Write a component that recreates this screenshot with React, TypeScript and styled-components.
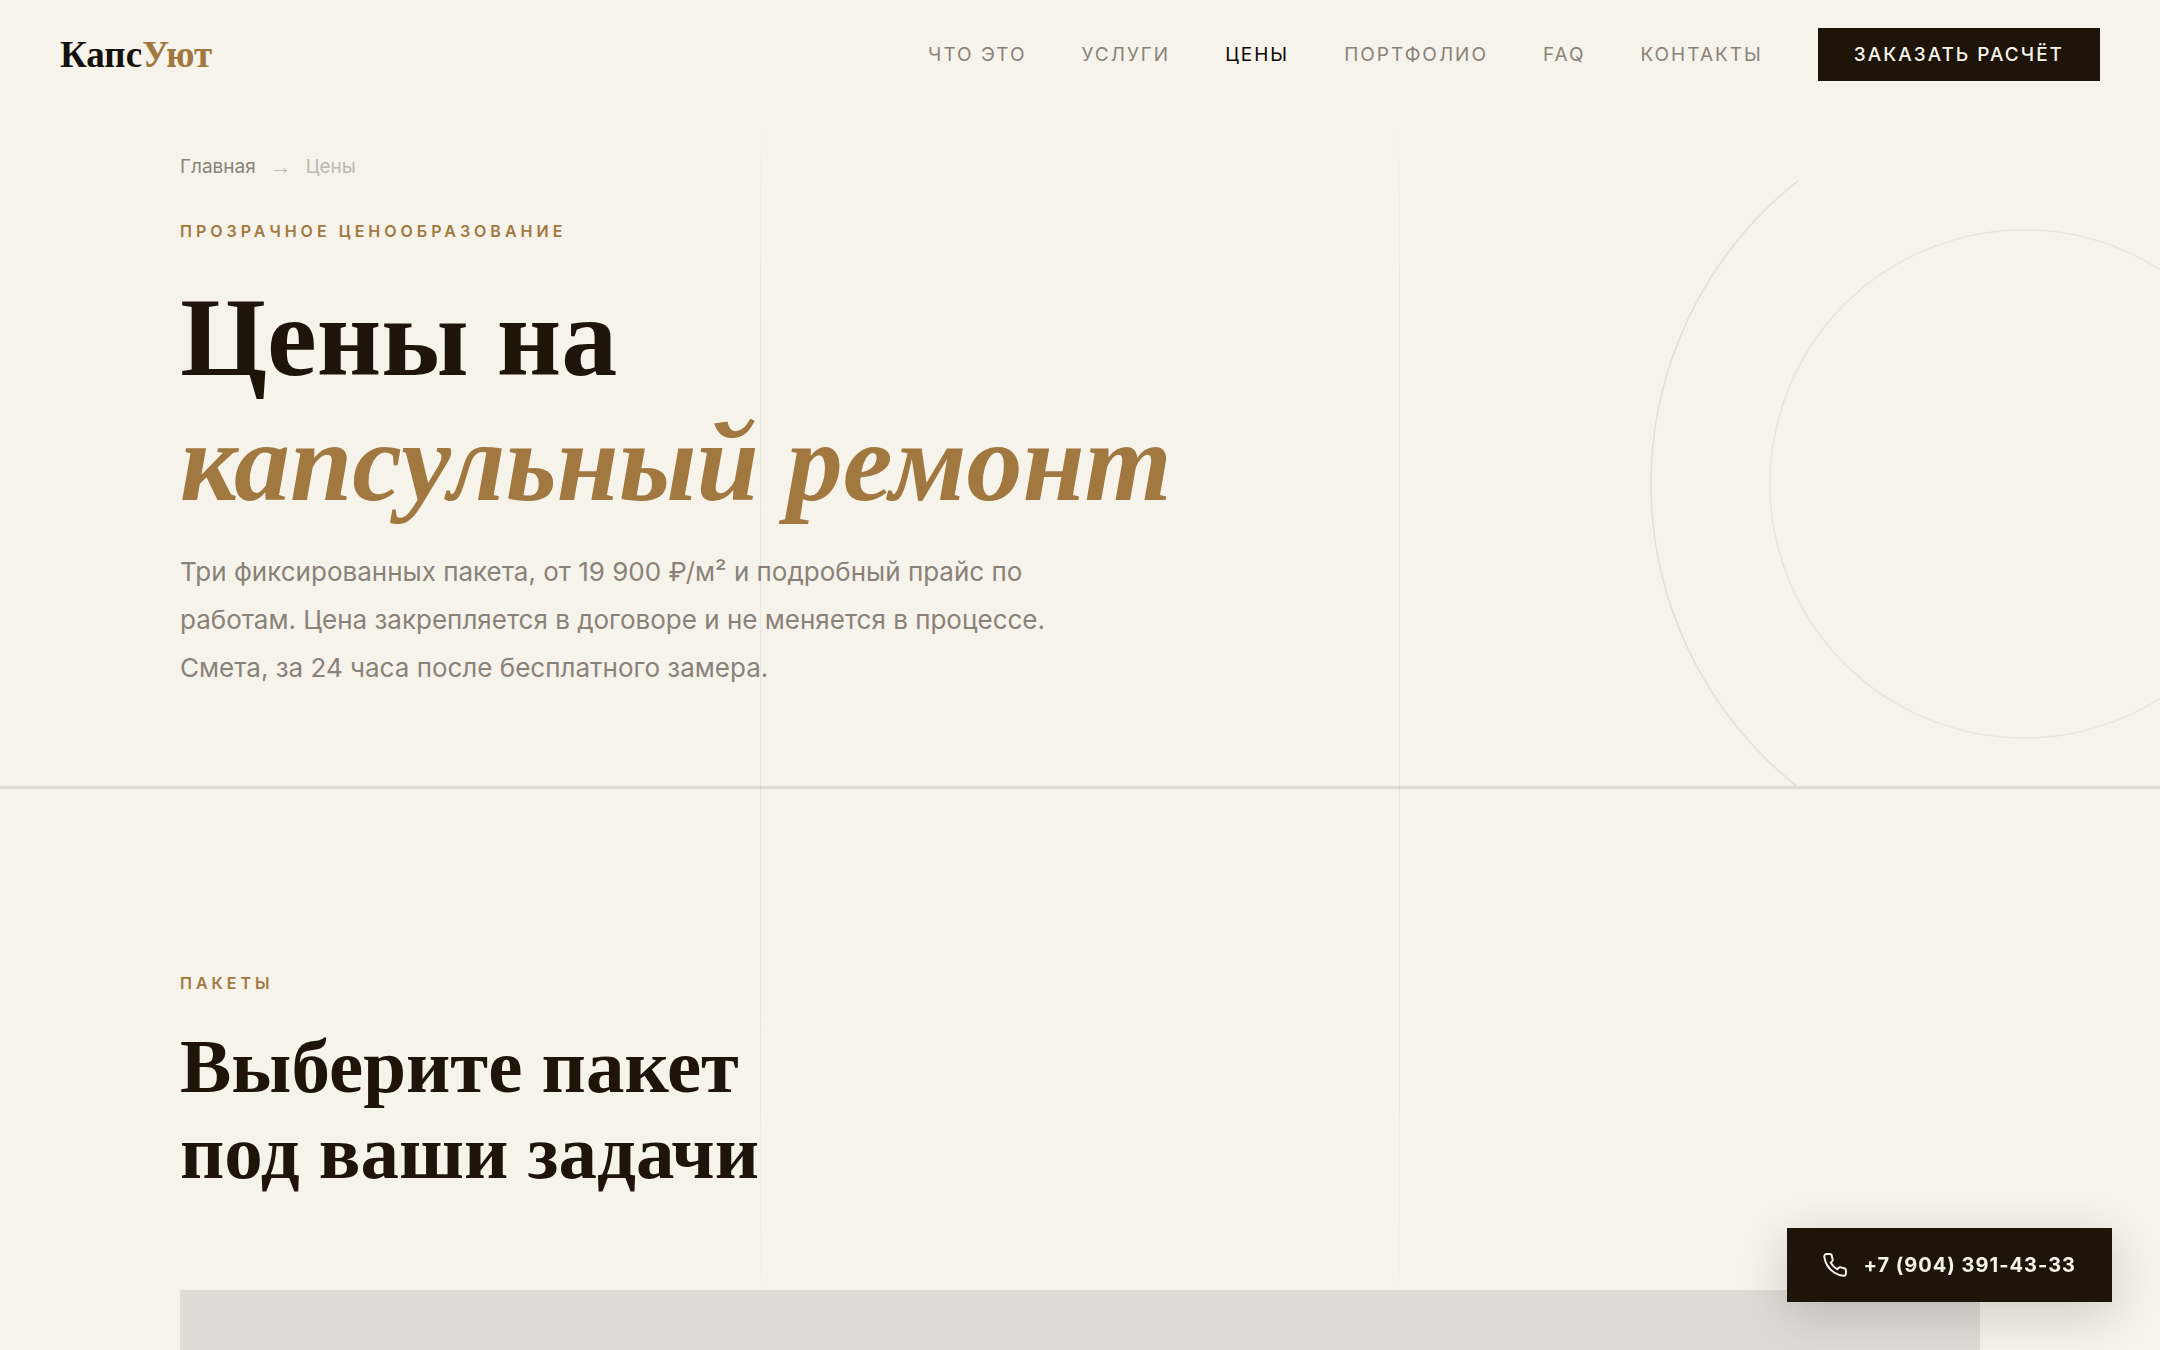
import React from "react";
import styled, { createGlobalStyle } from "styled-components";

const serif = `"Liberation Serif", "Times New Roman", serif`;
const sans = `Inter, "Noto Sans", sans-serif`;

const color = {
  paper: "#f6f3eb",
  ink: "#1e140a",
  gold: "#a07840",
  muted: "#8a8279",
  faint: "#bfb9b0",
  line: "#e0dbd5",
};

const GlobalStyle = createGlobalStyle`
  *, *::before, *::after { box-sizing: border-box; }
  html { background: ${color.paper}; }
  body {
    margin: 0;
    color: ${color.ink};
    font-family: ${sans};
    overflow-x: hidden;
  }
  h1, h2, p, ul, ol { margin: 0; padding: 0; }
  ul, ol { list-style: none; }
  a { color: inherit; text-decoration: none; }
`;

const Page = styled.div`
  position: relative;
  height: 100vh;
  overflow: hidden;
  display: flex;
  flex-direction: column;
`;

const Guides = styled.div`
  position: absolute;
  inset: 0;
  display: flex;
  justify-content: center;
  pointer-events: none;
  z-index: 2;
`;

const GuideColumn = styled.div`
  width: 640px;
  border: 1px solid;
  border-width: 0 1px;
  border-image: linear-gradient(
      to bottom,
      transparent 8%,
      rgba(30, 20, 10, 0.06) 24%,
      rgba(30, 20, 10, 0.06) 76%,
      transparent
    )
    1;
`;

const Header = styled.header`
  flex: none;
  display: flex;
  align-items: center;
  justify-content: space-between;
  padding: 28px 60px;
`;

const Logo = styled.a`
  font: 700 37px/44px ${serif};
  color: #15110c;
`;

const LogoAccent = styled.span`
  color: ${color.gold};
`;

const Nav = styled.nav`
  display: flex;
  align-items: center;
  gap: 55px;
`;

const NavList = styled.ul`
  display: flex;
  gap: 55px;
`;

const NavLink = styled.a<{ $active?: boolean }>`
  font-size: 19px;
  line-height: 25px;
  letter-spacing: 2px;
  text-transform: uppercase;
  color: ${(p) => (p.$active ? "#0c0804" : color.muted)};
`;

const OrderButton = styled.button`
  border: 0;
  padding: 14px 36px;
  background: ${color.ink};
  color: ${color.paper};
  font: 500 19px/25px ${sans};
  letter-spacing: 2px;
  text-transform: uppercase;
`;

const Hero = styled.section`
  flex: none;
  position: relative;
  padding: 46px 180px 94px;
  border-bottom: 3px solid ${color.line};
`;

const Rings = styled.svg`
  position: absolute;
  right: 0;
  bottom: 0;
  width: 540px;
  height: 605px;
  fill: none;
  stroke: ${color.line};
`;

const Crumbs = styled.ol`
  display: flex;
  gap: 14px;
  margin-bottom: 40px;
  font-size: 19px;
  line-height: 24px;
  color: ${color.faint};
`;

const CrumbLink = styled.a`
  color: ${color.muted};
`;

const CrumbArrow = styled.li`
  font-family: ${serif};
  font-size: 22px;
`;

const Eyebrow = styled.p`
  font-size: 16px;
  font-weight: 600;
  line-height: 24px;
  letter-spacing: 4px;
  text-transform: uppercase;
  color: ${color.gold};
`;

const Title = styled.h1`
  margin: 32px 0 23px;
  font: 700 112px/125px ${serif};
`;

const TitleAccent = styled.em`
  display: block;
  color: ${color.gold};
`;

const Lead = styled.p`
  max-width: 900px;
  font-size: 26px;
  line-height: 48px;
  color: ${color.muted};
`;

const Packages = styled.section`
  flex: 1;
  display: flex;
  flex-direction: column;
  padding: 182px 180px 0;
`;

const Heading = styled.h2`
  margin: 28px 0 95px;
  font: 700 77px/86px ${serif};
`;

const Plans = styled.div`
  flex: 1;
  background: ${color.line};
`;

const PhoneLink = styled.a`
  position: fixed;
  right: 48px;
  bottom: 48px;
  z-index: 3;
  display: flex;
  align-items: center;
  gap: 16px;
  padding: 25px 36px;
  background: ${color.ink};
  color: ${color.paper};
  font-size: 20px;
  font-weight: 700;
  line-height: 24px;
  letter-spacing: 1px;
  box-shadow: 0 12px 48px rgba(30, 20, 10, 0.18);
`;

const PhoneIcon = styled.svg`
  width: 24px;
  height: 24px;
  fill: none;
  stroke: currentColor;
  stroke-width: 1.8;
  stroke-linecap: round;
  stroke-linejoin: round;
`;

const links = [
  { label: "Что это", href: "#about" },
  { label: "Услуги", href: "#services" },
  { label: "Цены", href: "#prices", active: true },
  { label: "Портфолио", href: "#portfolio" },
  { label: "FAQ", href: "#faq" },
  { label: "Контакты", href: "#contacts" },
];

export default function App() {
  return (
    <Page>
      <GlobalStyle />
      <Guides aria-hidden="true">
        <GuideColumn />
      </Guides>

      <Header>
        <Logo href="#home">
          Капс<LogoAccent>Уют</LogoAccent>
        </Logo>
        <Nav>
          <NavList>
            {links.map((link) => (
              <li key={link.href}>
                <NavLink href={link.href} $active={link.active}>
                  {link.label}
                </NavLink>
              </li>
            ))}
          </NavList>
          <OrderButton type="button">Заказать расчёт</OrderButton>
        </Nav>
      </Header>

      <Hero>
        <Rings viewBox="0 0 540 605" aria-hidden="true">
          <circle cx="417" cy="303" r="386" strokeWidth="1.5" opacity="0.9" />
          <circle cx="404" cy="303" r="254" strokeWidth="1.5" opacity="0.6" />
        </Rings>
        <Crumbs>
          <li>
            <CrumbLink href="#home">Главная</CrumbLink>
          </li>
          <CrumbArrow aria-hidden="true">→</CrumbArrow>
          <li aria-current="page">Цены</li>
        </Crumbs>
        <Eyebrow>Прозрачное ценообразование</Eyebrow>
        <Title>
          Цены на <TitleAccent>капсульный ремонт</TitleAccent>
        </Title>
        <Lead>
          Три фиксированных пакета, от 19 900 ₽/м² и подробный прайс по работам.
          Цена закрепляется в договоре и не меняется в процессе. Смета, за 24
          часа после бесплатного замера.
        </Lead>
      </Hero>

      <Packages>
        <Eyebrow>Пакеты</Eyebrow>
        <Heading>
          Выберите пакет
          <br />
          под ваши задачи
        </Heading>
        <Plans />
      </Packages>

      <PhoneLink href="tel:+79043914333">
        <PhoneIcon viewBox="1 1 22 22" aria-hidden="true">
          <path d="M22 16.92v3a2 2 0 0 1-2.18 2 19.79 19.79 0 0 1-8.63-3.07A19.5 19.5 0 0 1 5.19 12.8 19.79 19.79 0 0 1 2.12 4.18 2 2 0 0 1 4.11 2h3a2 2 0 0 1 2 1.72c.13.96.36 1.9.7 2.81a2 2 0 0 1-.45 2.11L8.09 9.91a16 16 0 0 0 6 6l1.27-1.27a2 2 0 0 1 2.11-.45c.91.34 1.85.57 2.81.7A2 2 0 0 1 22 16.92z" />
        </PhoneIcon>
        +7 (904) 391-43-33
      </PhoneLink>
    </Page>
  );
}
